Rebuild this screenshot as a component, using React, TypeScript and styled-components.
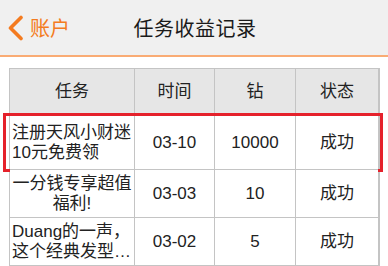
import React from 'react';
import styled, { createGlobalStyle } from 'styled-components';

const GlobalStyle = createGlobalStyle`
  html, body {
    margin: 0;
    padding: 0;
    background: #ffffff;
  }
  body {
    font-family: "Liberation Sans", "Noto Sans CJK SC", sans-serif;
    color: #222;
  }
`;

const Page = styled.div`
  width: 388px;
  height: 266px;
  overflow: hidden;
  background: #fff;
`;

const NavBar = styled.header`
  height: 55px;
  background: #f0f0f0;
  border-bottom: 2px solid #f9ab74;
  display: grid;
  grid-template-columns: 1fr auto 1fr;
  align-items: center;
`;

const BackButton = styled.button`
  display: flex;
  align-items: center;
  gap: 6px;
  padding: 0 0 0 7px;
  border: none;
  background: none;
  color: #f47b20;
  font-family: inherit;
  font-size: 20px;
  justify-self: start;
`;

const Title = styled.h1`
  margin: 0 0 0 2px;
  font-size: 20px;
  font-weight: normal;
  color: #1a1a1a;
  letter-spacing: 0.5px;
`;

const TableWrap = styled.div`
  margin: 11px 8px 0 9px;
  border: 1px solid #c4c4c4;
  border-right-width: 2px;
`;

const Row = styled.div<{ head?: boolean; h: number; marked?: boolean }>`
  position: relative;
  display: grid;
  grid-template-columns: 124px 80px 81px 1fr;
  height: ${p => p.h}px;
  background: ${p => (p.head ? '#e6e6e6' : '#fff')};
  & + & {
    border-top: 1px solid #c4c4c4;
  }
  ${p => p.marked && `
    &::after {
      content: '';
      position: absolute;
      left: -7px;
      right: -5px;
      top: -3px;
      bottom: -3px;
      border: 3px solid #e5212b;
      pointer-events: none;
    }
  `}
`;

const Cell = styled.div`
  display: flex;
  align-items: center;
  justify-content: center;
  padding: 0 2px;
  font-size: 17px;
  line-height: 20px;
  & + & {
    border-left: 1px solid #c4c4c4;
  }
`;

const TaskText = styled.span<{ align?: 'left' | 'center' }>`
  display: -webkit-box;
  -webkit-line-clamp: 2;
  -webkit-box-orient: vertical;
  overflow: hidden;
  width: 100%;
  text-align: ${p => p.align || 'left'};
  word-break: break-all;
`;

const ChevronIcon = () => (
  <svg width="17" height="26" viewBox="0 0 17 26">
    <path d="M14 2.5 L3.5 13 L14 23.5" fill="none" stroke="#f47b20" strokeWidth="3.6" strokeLinecap="round" strokeLinejoin="round" />
  </svg>
);

type Record = { task: string; time: string; coins: string; status: string; align: 'left' | 'center'; h: number; marked?: boolean };

const records: Record[] = [
  { task: '注册天风小财迷10元免费领', time: '03-10', coins: '10000', status: '成功', align: 'left', h: 53, marked: true },
  { task: '一分钱专享超值福利!', time: '03-03', coins: '10', status: '成功', align: 'center', h: 47 },
  { task: 'Duang的一声，这个经典发型就这样诞生了', time: '03-02', coins: '5', status: '成功', align: 'left', h: 47 },
];

export default function App() {
  return (
    <Page>
      <GlobalStyle />
      <NavBar>
        <BackButton>
          <ChevronIcon />
          账户
        </BackButton>
        <Title>任务收益记录</Title>
        <span />
      </NavBar>
      <TableWrap>
        <Row head h={46}>
          <Cell>任务</Cell>
          <Cell>时间</Cell>
          <Cell>钻</Cell>
          <Cell>状态</Cell>
        </Row>
        {records.map(r => (
          <Row key={r.time} h={r.h} marked={r.marked}>
            <Cell>
              <TaskText align={r.align}>{r.task}</TaskText>
            </Cell>
            <Cell>{r.time}</Cell>
            <Cell>{r.coins}</Cell>
            <Cell>{r.status}</Cell>
          </Row>
        ))}
      </TableWrap>
    </Page>
  );
}
